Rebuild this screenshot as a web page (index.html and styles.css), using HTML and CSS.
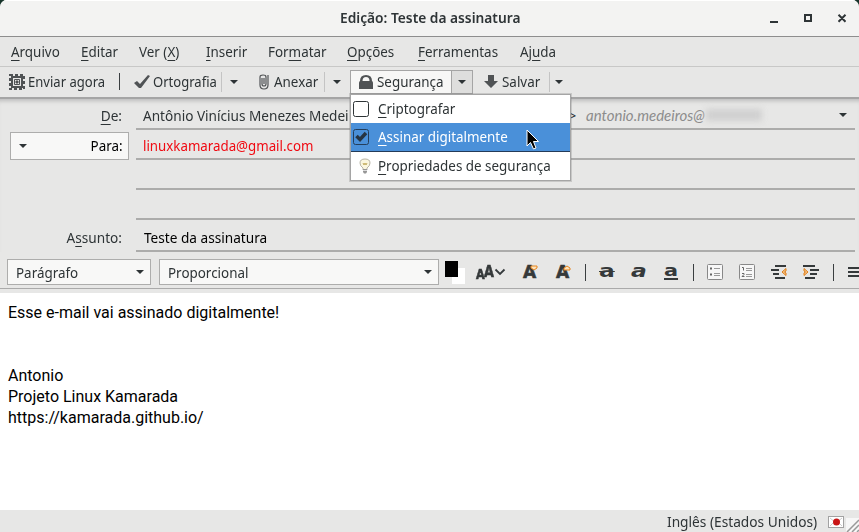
FILE: index.html
```html
<!DOCTYPE html>
<html lang="pt-BR">
<head>
<meta charset="utf-8">
<title>Edição: Teste da assinatura</title>
<link rel="stylesheet" href="styles.css">
</head>
<body>
<div class="backdrop">
<div class="window">
  <header class="titlebar">
    <span></span>
    <h1>Edição: Teste da assinatura</h1>
    <div class="controls">
      <svg width="75" height="10" viewBox="0 0 75 10" fill="none" stroke="#2e3436" stroke-width="2"><path d="M0 8H8M35 1H41V7H35ZM75.500 .7L68.500 7.700M68.500 .7L75.500 7.700"/></svg>
    </div>
  </header>
  <nav class="menubar">
    <span><u>A</u>rquivo</span><span><u>E</u>ditar</span><span>Ver (<u>X</u>)</span><span><u>I</u>nserir</span><span>For<u>m</u>atar</span><span><u>O</u>pções</span><span><u>F</u>erramentas</span><span>Aj<u>u</u>da</span>
  </nav>
  <div class="toolbar">
    <button class="tool send"><svg width="16" height="16" viewBox="0 0 16 16" fill="none" stroke="#505355"><path stroke-width="2" stroke-dasharray="3 2" d="M1 1H15V15H1Z"/><path stroke-width="2" d="M3 3H13V13H3Z"/><path d="M5.500 5.500H10.500V10.500H5.500Z"/><path fill="#505355" d="M7 7H9V9H7Z"/></svg><span>Enviar agora</span></button>
    <i class="rule"></i>
    <button class="tool spell"><svg width="16" height="14" viewBox="0 0 16 14"><path fill="#505355" d="M0 8L3 6L6 9L14 0L16 1L7 13H5Z"/></svg><span>Ortografia</span></button>
    <button class="drop"><i class="arrow"></i></button>
    <button class="tool attach"><svg width="10" height="16" viewBox="0 0 10 16" fill="none" stroke="#505355" stroke-width="1.200"><path d="M3 4V10Q3 12 5 12Q7 12 7 10V3Q7 1 4 1Q1 1 1 3V11Q1 15 5 15Q9 15 9 11V1M5 4V10"/></svg><span>Anexar</span></button>
    <button class="drop"><i class="arrow"></i></button>
    <div class="secure">
      <button class="tool lock"><svg width="14" height="14" viewBox="0 0 14 14"><path d="M0 14V8Q0 6.500 1 6Q1 0 7 0Q13 0 13 6Q14 6.500 14 8V14Z" fill="#505355"/><path d="M3.500 6Q3.500 2 7 2Q10.500 2 10.500 6Z" fill="#f7f7f6"/></svg><span>Segurança</span></button>
      <button class="drop"><i class="arrow"></i></button>
      <div class="popup">
        <div class="item"><svg width="16" height="16" viewBox="0 0 16 16"><rect x=".5" y=".5" width="15" height="15" rx="2" fill="#fff" stroke="#2e3436"/></svg><span><u>C</u>riptografar</span></div>
        <div class="item active"><svg width="16" height="16" viewBox="0 0 16 16"><rect x=".5" y=".5" width="15" height="15" rx="2" fill="none" stroke="#243e5b"/><path d="M3.500 7L7 10.500L13 4" fill="none" stroke="#263442" stroke-width="3.500"/></svg><span><u>A</u>ssinar digitalmente</span></div>
        <div class="item props"><svg width="16" height="16" viewBox="0 0 16 16"><path d="M6 10Q3 8 3 5Q3 1 8 1Q13 1 13 5Q13 8 10 10V12H6Z" fill="#fbf7df" stroke="#b7b4a5"/><path d="M6 5L7 7L8 5L9 7L10 5" fill="none" stroke="#c5ae60"/><path d="M6 11H10V14L9 15.500H7L6 14Z" fill="#969696"/><path d="M6 12.500H10" stroke="#ddd"/></svg><span><u>P</u>ropriedades de segurança</span></div>
        <svg class="pointer" width="14" height="22" viewBox="0 0 14 22"><path d="M1 1V17L4.500 13.500L7.500 20L10 19L7.500 12.500H12.500Z" fill="#000" stroke="#fff"/></svg>
      </div>
    </div>
    <button class="tool save"><svg width="14" height="14" viewBox="0 0 14 14"><path fill="#505355" d="M4 0H10V6H14L7 13L0 6H4Z"/></svg><span>Salvar</span></button>
    <button class="drop last"><i class="arrow"></i></button>
  </div>
  <section class="headers">
    <div class="row"><label><u>D</u>e:</label><div class="field from"><span class="name">Antônio Vinícius Menezes Medei</span><b>&gt;</b><em>antonio.medeiros@</em><i class="blur"></i><i class="arrow"></i></div></div>
    <div class="row"><div class="pick"><i class="arrow"></i><span>Para:</span></div><div class="field to"><span>linuxkamarada@gmail.com</span></div></div>
    <div class="row"><div class="field blank"></div></div>
    <div class="row"><div class="field blank"></div></div>
    <div class="row subject"><label>A<u>s</u>sunto:</label><div class="field"><span>Teste da assinatura</span></div></div>
  </section>
  <div class="format">
    <div class="select para"><span>Parágrafo</span><i class="arrow"></i></div>
    <div class="select font"><span>Proporcional</span><i class="arrow"></i></div>
    <div class="swatch"><i></i></div>
    <div class="glyph size"><span>A</span><span>A</span><svg width="12" height="8" viewBox="0 0 12 8"><path d="M1.500 1.500L6 6L10.500 1.500" fill="none" stroke="#353a3c" stroke-width="1.800"/></svg></div>
    <div class="glyph small"><span>A</span><svg width="8" height="6" viewBox="0 0 8 6"><path d="M1 1H7V3L4 5L1 3Z" fill="#fbe3bd" stroke="#e8841c"/></svg></div>
    <div class="glyph large"><span>A</span><svg width="8" height="6" viewBox="0 0 8 6"><path d="M1 5H7V3L4 1L1 3Z" fill="#fbe3bd" stroke="#e8841c"/></svg></div>
    <i class="rule"></i>
    <div class="glyph bold">a</div>
    <div class="glyph ital">a</div>
    <div class="glyph under">a</div>
    <i class="rule r2"></i>
    <svg class="list" width="16" height="16" viewBox="0 0 16 16"><rect x=".5" y=".5" width="15" height="15" rx="1" fill="#f7f7f7" stroke="#888"/><path d="M3 4.500H5M3 10.500H5" stroke="#666" stroke-width="2"/><path d="M7 4.500H13M7 9.500H13M7 11.500H13" stroke="#999"/></svg>
    <svg class="list" width="16" height="16" viewBox="0 0 16 16"><rect x=".5" y=".5" width="15" height="15" rx="1" fill="#f7f7f7" stroke="#888"/><path d="M3 3.500H4.500V6.500M3 9.500H5V10.500L3 12.500H5.500" fill="none" stroke="#666"/><path d="M7 4.500H13M7 6.500H13M7 10.500H13M7 12.500H13" stroke="#999"/></svg>
    <svg class="list" width="16" height="16" viewBox="0 0 16 16"><path d="M4 2H15M0 6H8M2 10H8M4 14H14" stroke="#35393a" stroke-width="2.200"/><path d="M15 4.500L11 8L15 11.500V9L13.500 8L15 7Z" fill="#f7c889" stroke="#df7d19"/></svg>
    <svg class="list" width="16" height="16" viewBox="0 0 16 16"><path d="M0 2H12M7 6H16M7 10H14M2 14H12" stroke="#35393a" stroke-width="2.200"/><path d="M1 4.500L5 8L1 11.500V9L2.500 8L1 7Z" fill="#f7c889" stroke="#df7d19"/></svg>
    <i class="rule r3"></i>
    <svg class="align" width="12" height="16" viewBox="0 0 12 16"><path d="M0 4H12M0 8H12M0 12H12" stroke="#35393a" stroke-width="2"/></svg>
  </div>
  <main class="editor">
    <p>Esse e-mail vai assinado digitalmente!</p><br><br>
    <p>Antonio</p><p>Projeto Linux Kamarada</p><p>https://kamarada.github.io/</p>
  </main>
  <footer class="status"><span>Inglês (Estados Unidos)</span>
    <svg width="16" height="12" viewBox="0 0 16 12"><rect x=".5" y=".5" width="15" height="11" fill="#fff" stroke="#a2a2a2"/><path d="M2 2L8 7L14 2M2 10L6 6M14 10L10 6" fill="none" stroke="#ccc"/><circle cx="8.500" cy="6" r="3.500" fill="#c91414"/></svg>
    <svg class="grip" width="13" height="14" viewBox="0 0 13 14"><path d="M0 0H13V14H0Z" fill="#f7f7f7"/><path d="M1 14L13 2M6 14L13 7M11 14L13 12" stroke="#999" stroke-width="1.500"/></svg>
  </footer>
</div>
</div>
</body>
</html>
```
FILE: styles.css
```css
* { box-sizing: border-box; }
body { margin: 0; background: #fff; color: #2e3436; font: 14.5px/20px "Noto Sans", sans-serif; overflow: hidden; }
button { border: 0; padding: 0; background: none; color: inherit; font: inherit; }
u { text-underline-offset: 3px; text-decoration-thickness: 1px; text-decoration-skip-ink: none; }

/* Condensed interface text */
h1, .menubar span, .tool span, .item span, .field span, .select span, .status span { transform: scaleX(.925); transform-origin: 0 50%; }
.row label, .pick span { transform: scaleX(.925); transform-origin: 100% 50%; }

.backdrop { background: #17342b; width: 859px; height: 532px; }
.window { width: 859px; height: 532px; background: #e7e7e6; border-radius: 7px 7px 0 0; overflow: hidden; display: flex; flex-direction: column; white-space: nowrap; }
.titlebar { height: 37px; flex: none; display: grid; grid-template-columns: 340px 1fr 89px; align-items: center; background: #f3f3f2; border-top: 1px solid #fff; border-bottom: 1px solid #8e8e8e; padding-bottom: 3px; }
.titlebar h1 { margin: 0; font-size: 14.5px; line-height: 20px; font-weight: 600; transform: scaleX(.948); }
.controls { display: flex; padding-top: 3px; }
.controls svg { overflow: visible; }
.menubar { height: 30px; flex: none; display: grid; grid-template-columns: 70px 58px 67px 62px 79px 71px 102px 70px; padding: 0 0 2px 11px; align-items: center; border-bottom: 1px solid #c8c8c7; }
.toolbar { height: 32px; flex: none; display: flex; align-items: center; padding: 0 0 1px 9px; border-bottom: 2px solid #a5a5a5; }
.tool { display: flex; align-items: center; gap: 3px; flex: none; text-align: left; }
.tool svg { flex: none; }
.tool span { padding-bottom: 2px; }
.send { width: 109px; }
.tool.send span { transform: scaleX(.9); }
.rule { width: 1px; height: 17px; background: #3a3e40; flex: none; margin-left: 1px; }
.spell { width: 87px; margin-left: 14px; }
.tool.spell span { transform: scaleX(.9); }
.drop { width: 24px; height: 20px; flex: none; border-left: 1px solid #c4c4c4; display: flex; align-items: center; justify-content: center; }
.drop.last { width: 18px; }
.arrow { width: 0; height: 0; border: 4px solid transparent; border-top-color: #2e3436; border-bottom: 0; flex: none; }
.attach { width: 65px; margin-left: 14px; gap: 5px; }
.secure { position: relative; display: flex; align-items: stretch; width: 123px; height: 24px; flex: none; margin: 0 0 0 2px; border: 1px solid #a5a5a5; background: #f7f7f6; }
.secure .tool { width: 100px; padding-left: 8px; gap: 4px; }
.secure .drop { width: 21px; height: 22px; background: #dededd; border-color: #a5a5a5; }
.popup { position: absolute; z-index: 2; top: 23px; left: -1px; width: 221px; height: 87px; background: #fff; border: 1px solid #a5a5a5; box-shadow: 0 0 0 1px rgba(130,130,130,.3); }
.item { height: 28px; padding-left: 2px; display: flex; align-items: center; gap: 9px; }
.item span { padding-bottom: 2px; }
.item.active { height: 29px; background: #4a90d9; border-bottom: 1px solid #243b58; color: #fff; }
.props svg { margin: 0 -4px 0 4px; }
.item svg { flex: none; }
.pointer { position: absolute; left: 175px; top: 34px; }
.save { width: 65px; margin-left: 11px; gap: 4px; }
.headers { height: 153px; flex: none; background: #e7e7e6; box-shadow: inset 0 5px 4px -3px #bbb; }
.row { height: 30px; display: flex; align-items: center; padding-right: 4px; }
.row:first-child { height: 31px; }
.row label { width: 122px; text-align: right; padding-top: 1px; transform: scaleX(.94); }
.field { margin-left: auto; width: 719px; height: 100%; padding-left: 7px; display: flex; align-items: center; border-bottom: 2px solid #acacab; }
.from { padding-top: 3px; }
.field .name { width: 220px; margin-right: 205px; flex: none; transform: scaleX(.938); }
.from b { width: 18px; font-weight: 400; }
.from em { font-family: Lato, sans-serif; color: #8c8c8c; font-size: 15px; }
.blur { width: 56px; height: 12px; background: #d0d0d0; filter: blur(3px); margin-left: 1px; }
.from .arrow { margin-left: auto; margin-right: 8px; }
.pick { width: 119px; height: 28px; margin: 2px 0 0 10px; display: flex; align-items: center; justify-content: space-between; padding: 0 5px 0 8px; border: 1px solid #adadac; background: #f8f8f7; color: #000; }
.pick span { padding-bottom: 2px; }
.to { color: #f00a12; padding-top: 1px; }
.to span { transform: scaleX(.917); }
.subject { height: 32px; }
.subject label { padding-top: 2px; }
.subject .field { padding-left: 8px; padding-top: 3px; color: #000; }
.subject .field span { transform: scaleX(.94); }
.format { height: 41px; flex: none; display: flex; align-items: center; padding: 0 0 1px 7px; background: linear-gradient(#e7e7e6 36px, #aaa 36px, #aaa 37px, #e7e7e6 37px); }
.select { height: 26px; border: 1px solid #adadac; background: #f8f8f7; display: flex; align-items: center; justify-content: space-between; padding: 0 6px 0 8px; flex: none; }
.select span { padding-bottom: 1px; }
.para { width: 144px; }
.font { width: 280px; margin-left: 8px; }
.swatch { width: 20px; height: 23px; margin-left: 6px; flex: none; display: grid; background: linear-gradient(#fff,#fff) 7px 7px / 13px 16px no-repeat; }
.swatch i { width: 13px; height: 16px; background: #000; }
.glyph { font: 700 18px/20px "DejaVu Sans", sans-serif; color: #35393a; display: flex; align-items: center; flex: none; }
.size { width: 29px; margin-left: 11px; }
.size span { width: 8px; font-size: 16px; transform: scaleX(.8); transform-origin: 0 50%; -webkit-text-stroke: .6px #35393a; }
.size span:first-child { font-size: 14px; padding-top: 3px; }
.size svg { margin-left: 2px; flex: none; }
.small, .large { width: 18px; font-size: 17px; -webkit-text-stroke: .6px #35393a; }
.small { margin-left: 18px; }
.large { margin-left: 15px; }
.small svg, .large svg { margin: -8px 0 0 -6px; flex: none; }
.format .rule { margin-left: 11px; }
.bold, .ital, .under { transform: scaleX(1.3) translateY(-1px); transform-origin: 0 50%; }
.bold { width: 17px; margin-left: 13px; text-decoration: line-through 1px; }
.ital { width: 17px; margin-left: 15px; font-style: italic; }
.under { width: 15px; margin-left: 16px; text-decoration: underline 2px; text-underline-offset: 2px; font-size: 16px; }
.list { flex: none; margin-left: 16px; }
.format .r2 { margin-left: 14px; }
.format .r2 + .list { margin-left: 13px; }
.format .r3 { margin-left: 14px; }
.align { margin-left: 14px; flex: none; }
.editor { flex: 1; background: #fff; padding: 9px 8px; color: #000; font: 16px/21px Roboto, sans-serif; }
.editor p { margin: 0; }
.status { height: 22px; flex: none; display: flex; align-items: center; justify-content: flex-end; }
.status span { width: 163px; margin-right: -2px; transform: scaleX(.945); padding-bottom: 1px; }
.status svg { margin-top: 1px; flex: none; }
.status .grip { align-self: flex-end; margin-left: 2px; }
```
